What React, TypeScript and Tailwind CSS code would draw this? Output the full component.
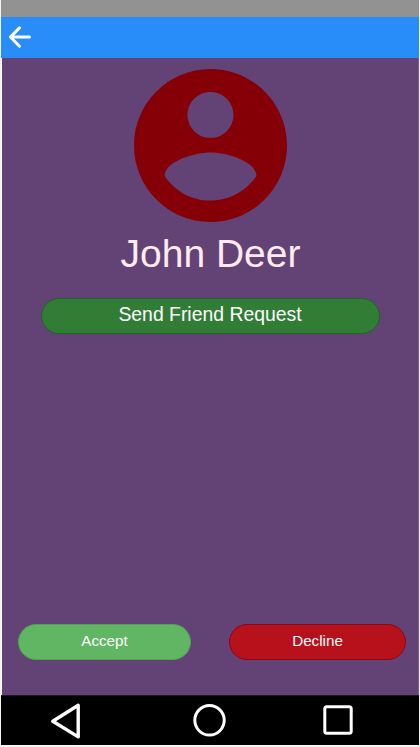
export default function App() {
  return (
    <div className="flex h-[747px] w-[420px] flex-col bg-[#f4f4f4] pr-px pl-px font-['Liberation_Sans',Arial,sans-serif]">
      <div className="h-[17px] shrink-0 bg-[#929292]" />
      <header className="flex h-[41px] shrink-0 items-center bg-[#288df8] pl-[7px]">
        <svg className="mb-px h-6 w-6" viewBox="0 0 24 24" fill="none" stroke="#fff" strokeWidth="3" strokeLinecap="round" strokeLinejoin="round">
          <path d="M21.5 12H2.5M11.5 2.9L2.4 12l9.1 9.3" />
        </svg>
      </header>
      <main className="flex h-[637px] shrink-0 flex-col items-center border-x border-l-white border-r-[#7a5d8c] bg-[#634275] pt-[11px]">
        <svg className="ml-px h-[153px] w-[153px] shrink-0" viewBox="2 2 20 20" fill="#850006">
          <path d="M12 2C6.48 2 2 6.48 2 12s4.48 10 10 10 10-4.48 10-10S17.52 2 12 2zm0 3c1.66 0 3 1.34 3 3s-1.34 3-3 3-3-1.34-3-3 1.34-3 3-3zm0 14.2c-2.5 0-4.71-1.28-6-3.22.03-1.99 4-3.08 6-3.08 1.99 0 5.97 1.09 6 3.08-1.29 1.94-3.5 3.22-6 3.22z" />
        </svg>
        <h1 className="mt-[9px] ml-px text-[39px] leading-[45px] whitespace-nowrap text-[#ffebee]">John Deer</h1>
        <button className="mt-[22px] flex h-[36px] w-[339px] shrink-0 justify-center rounded-full border border-[#226128] bg-[#317d36] pt-[4px] text-[19.4px] leading-[22px] text-white">
          Send Friend Request
        </button>
        <div className="mt-auto mb-[35px] flex w-full justify-between pr-[12px] pl-[16px]">
          <button className="flex h-[36px] w-[173px] justify-center rounded-full border border-[#50a354] bg-[#60b662] pt-[7px] text-[15.2px] leading-[18px] text-white">
            Accept
          </button>
          <button className="flex h-[36px] w-[177px] justify-center rounded-full border border-[#8b0711] bg-[#b7111c] pt-[7px] text-[15.2px] leading-[18px] text-white">
            Decline
          </button>
        </div>
      </main>
      <nav className="flex h-[50px] shrink-0 items-center border-t border-[#21152a] bg-black pl-[49px]">
        <svg className="h-[36px] w-[31px]" viewBox="0 0 31 36" fill="none" stroke="#fff" strokeWidth="3.4" strokeLinejoin="round">
          <path d="M28.2 2.3v31.6L2.8 18.3z" />
        </svg>
        <svg className="mb-px ml-[111px] h-[34px] w-[34px]" viewBox="0 0 34 34" fill="none" stroke="#fff" strokeWidth="3">
          <circle cx="17.5" cy="17.3" r="14.7" />
        </svg>
        <svg className="mb-px ml-[97px] h-[30px] w-[30px]" viewBox="0 0 30 30" fill="none" stroke="#fff" strokeWidth="3">
          <rect x="1.8" y="1.8" width="26.4" height="26.4" rx="2" />
        </svg>
      </nav>
    </div>
  );
}
